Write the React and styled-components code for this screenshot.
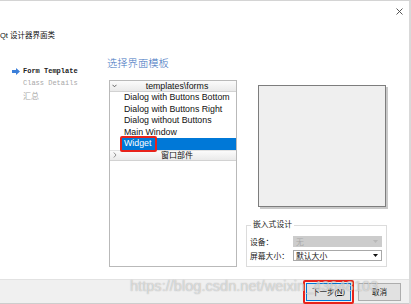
import React from "react";
import styled, { createGlobalStyle } from "styled-components";

const Global = createGlobalStyle`
  html, body { margin: 0; padding: 0; background: #ffffff; }
  body { font-family: "Liberation Sans", "Noto Sans CJK SC", sans-serif; }
  * { box-sizing: border-box; }
`;

const Window = styled.div`
  position: relative;
  width: 411px;
  height: 304px;
  border-top: 1px solid #d4d4d4;
  border-right: 2px solid #d9d9d9;
  background: #ffffff;
  display: flex;
  flex-direction: column;
  overflow: hidden;
`;

const TitleBar = styled.div`
  height: 21px;
  display: flex;
  justify-content: flex-end;
  align-items: center;
  padding-right: 6px;
`;

const PageTitle = styled.div`
  height: 28px;
  line-height: 28px;
  font-size: 7.5px;
  color: #111;
  white-space: nowrap;
`;

const Content = styled.div`
  flex: 1;
  display: flex;
`;

const Nav = styled.div`
  width: 107px;
  padding-top: 15px;
  display: flex;
  flex-direction: column;
`;

const NavItem = styled.div`
  height: 12px;
  display: flex;
  align-items: center;
  padding-left: 12px;
  font-family: "Liberation Mono", monospace;
  font-size: 7px;
  font-weight: ${(p) => (p.$active ? 700 : 400)};
  color: ${(p) => (p.$active ? "#222" : "#a8a8a8")};
  white-space: nowrap;
`;

const NavCjk = styled.span`
  font-family: "Noto Sans CJK SC", sans-serif;
  font-size: 8px;
`;

const ArrowSlot = styled.span`
  width: 11px;
  height: 8px;
  display: flex;
  align-items: center;
`;

const Main = styled.div`
  flex: 1;
  padding-top: 5px;
  display: flex;
  flex-direction: column;
`;

const Heading = styled.div`
  height: 16px;
  line-height: 16px;
  font-family: "Noto Sans CJK SC", sans-serif;
  font-size: 10.3px;
  font-weight: 300;
  color: #3f74c0;
  letter-spacing: 0;
`;

const Row = styled.div`
  margin-top: 9px;
  display: flex;
  height: 187px;
`;

const Tree = styled.div`
  margin-left: 2px;
  width: 128px;
  height: 187px;
  border: 1px solid #b9b9b9;
  background: #fff;
  display: flex;
  flex-direction: column;
`;

const TreeHeader = styled.div`
  height: 11px;
  display: flex;
  align-items: center;
  background: linear-gradient(#fbfbfb, #eaeaea);
  border-bottom: 1px solid #d2d2d2;
  border-top: ${(p) => (p.$top ? "none" : "1px solid #e2e2e2")};
`;

const Chevron = styled.span`
  width: 8px;
  display: flex;
  justify-content: center;
  align-items: center;
  padding-left: 1px;
`;

const HeaderText = styled.span`
  flex: 1;
  text-align: center;
  font-size: ${(p) => (p.$cjk ? "8px" : "8.8px")};
  line-height: 11px;
  color: #111;
  white-space: nowrap;
`;

const Item = styled.div`
  position: relative;
  height: 11.5px;
  line-height: 11.5px;
  margin-left: 11px;
  padding-left: 3px;
  font-size: 8.8px;
  white-space: nowrap;
  color: ${(p) => (p.$selected ? "#ffffff" : "#111111")};
  background: ${(p) => (p.$selected ? "#0078d7" : "transparent")};
`;

const RedMark = styled.span`
  position: absolute;
  left: ${(p) => p.$l}px;
  top: ${(p) => p.$t}px;
  width: ${(p) => p.$w}px;
  height: ${(p) => p.$h}px;
  border: 2px solid #e8231b;
  border-radius: 2px;
  pointer-events: none;
`;

const RightCol = styled.div`
  margin-left: 9px;
  width: 141px;
  display: flex;
  flex-direction: column;
`;

const Preview = styled.div`
  margin-left: 12px;
  margin-top: 5px;
  width: 128px;
  height: 122px;
  background: #efefef;
  border: 1px solid #7d7d7d;
  box-shadow: 2px 2px 0 #c9c9c9;
`;

const Group = styled.fieldset`
  margin: auto 0 0 0;
  padding: 6px 4px 5px 3px;
  border: 1px solid #dcdcdc;
  min-width: 0;
  display: flex;
  flex-direction: column;
  gap: 3px;
`;

const Legend = styled.legend`
  padding: 0 2px;
  margin-left: 1px;
  font-size: 7.8px;
  line-height: 10px;
  color: #222;
`;

const FieldRow = styled.div`
  display: flex;
  align-items: center;
  height: 11px;
`;

const Label = styled.span`
  width: 43px;
  font-size: 7.8px;
  color: #222;
  white-space: nowrap;
`;

const Combo = styled.div`
  width: 89px;
  height: 11px;
  display: flex;
  align-items: center;
  justify-content: space-between;
  padding: 0 3px 0 2px;
  font-size: 7.8px;
  color: ${(p) => (p.$disabled ? "#a9a9a9" : "#111")};
  background: ${(p) => (p.$disabled ? "#cccccc" : "#ffffff")};
  border: 1px solid ${(p) => (p.$disabled ? "#cccccc" : "#a8a8a8")};
`;

const Footer = styled.div`
  height: 25px;
  background: #f0f0f0;
  border-top: 1px solid #e2e2e2;
  border-bottom: 1px solid #cdcdcd;
  display: flex;
  justify-content: flex-end;
  align-items: center;
  gap: 7px;
  padding-right: 8px;
`;

const ButtonWrap = styled.div`
  position: relative;
  display: flex;
`;

const Button = styled.button`
  width: ${(p) => p.$w}px;
  height: 18px;
  padding: 0;
  margin: 0;
  background: #e1e1e1;
  border: 1px solid ${(p) => (p.$default ? "#0078d7" : "#adadad")};
  font-family: "Liberation Sans", "Noto Sans CJK SC", sans-serif;
  font-size: 7.5px;
  color: #111;
  display: flex;
  align-items: center;
  justify-content: center;
`;

const Watermark = styled.div`
  position: absolute;
  left: 130px;
  top: 276px;
  font-family: "Liberation Sans", sans-serif;
  font-size: 14.6px;
  line-height: 18px;
  color: rgba(255, 255, 255, 0.55);
  text-shadow: 0 0 1px rgba(90, 90, 90, 0.55);
  white-space: nowrap;
  pointer-events: none;
`;

const CloseIcon = () => (
  <svg width="7" height="7" viewBox="0 0 7 7">
    <path d="M0.5 0.5 L6.5 6.5 M6.5 0.5 L0.5 6.5" stroke="#444" strokeWidth="0.9" />
  </svg>
);

const NavArrow = () => (
  <svg width="8" height="7" viewBox="0 0 8 7">
    <path d="M0 2 H4 V0 L8 3.5 L4 7 V5 H0 Z" fill="#3b7fd9" />
  </svg>
);

const ChevronDown = () => (
  <svg width="5" height="4" viewBox="0 0 5 4">
    <path d="M0.5 0.8 L2.5 2.8 L4.5 0.8" fill="none" stroke="#555" strokeWidth="0.9" />
  </svg>
);

const ChevronRight = () => (
  <svg width="4" height="6" viewBox="0 0 4 6">
    <path d="M0.8 0.5 L3 3 L0.8 5.5" fill="none" stroke="#888" strokeWidth="0.9" />
  </svg>
);

const DropArrow = ({ color }) => (
  <svg width="5" height="3" viewBox="0 0 5 3">
    <path d="M0 0 H5 L2.5 3 Z" fill={color} />
  </svg>
);

const items = [
  "Dialog with Buttons Bottom",
  "Dialog with Buttons Right",
  "Dialog without Buttons",
  "Main Window",
  "Widget",
];

export default function App() {
  return (
    <>
      <Global />
      <Window>
        <TitleBar>
          <CloseIcon />
        </TitleBar>
        <PageTitle>Qt 设计器界面类</PageTitle>
        <Content>
          <Nav>
            <NavItem $active>
              <ArrowSlot>
                <NavArrow />
              </ArrowSlot>
              Form Template
            </NavItem>
            <NavItem>
              <ArrowSlot />
              Class Details
            </NavItem>
            <NavItem>
              <ArrowSlot />
              <NavCjk>汇总</NavCjk>
            </NavItem>
          </Nav>
          <Main>
            <Heading>选择界面模板</Heading>
            <Row>
              <Tree>
                <TreeHeader $top>
                  <Chevron>
                    <ChevronDown />
                  </Chevron>
                  <HeaderText>templates\forms</HeaderText>
                </TreeHeader>
                {items.map((t) => (
                  <Item key={t} $selected={t === "Widget"}>
                    {t}
                    {t === "Widget" && <RedMark $l={-1} $t={-2} $w={37} $h={16} />}
                  </Item>
                ))}
                <TreeHeader>
                  <Chevron>
                    <ChevronRight />
                  </Chevron>
                  <HeaderText $cjk>窗口部件</HeaderText>
                </TreeHeader>
              </Tree>
              <RightCol>
                <Preview />
                <Group>
                  <Legend>嵌入式设计</Legend>
                  <FieldRow>
                    <Label>设备：</Label>
                    <Combo $disabled>
                      <span>无</span>
                      <DropArrow color="#b8b8b8" />
                    </Combo>
                  </FieldRow>
                  <FieldRow>
                    <Label>屏幕大小：</Label>
                    <Combo>
                      <span>默认大小</span>
                      <DropArrow color="#111" />
                    </Combo>
                  </FieldRow>
                </Group>
              </RightCol>
            </Row>
          </Main>
        </Content>
        <Footer>
          <ButtonWrap>
            <Button $w={45} $default>
              下一步(<u>N</u>)
            </Button>
            <RedMark $l={-3} $t={-3} $w={51} $h={24} />
          </ButtonWrap>
          <Button $w={43}>取消</Button>
        </Footer>
        <Watermark>https://blog.csdn.net/weixin_43648103</Watermark>
      </Window>
    </>
  );
}
